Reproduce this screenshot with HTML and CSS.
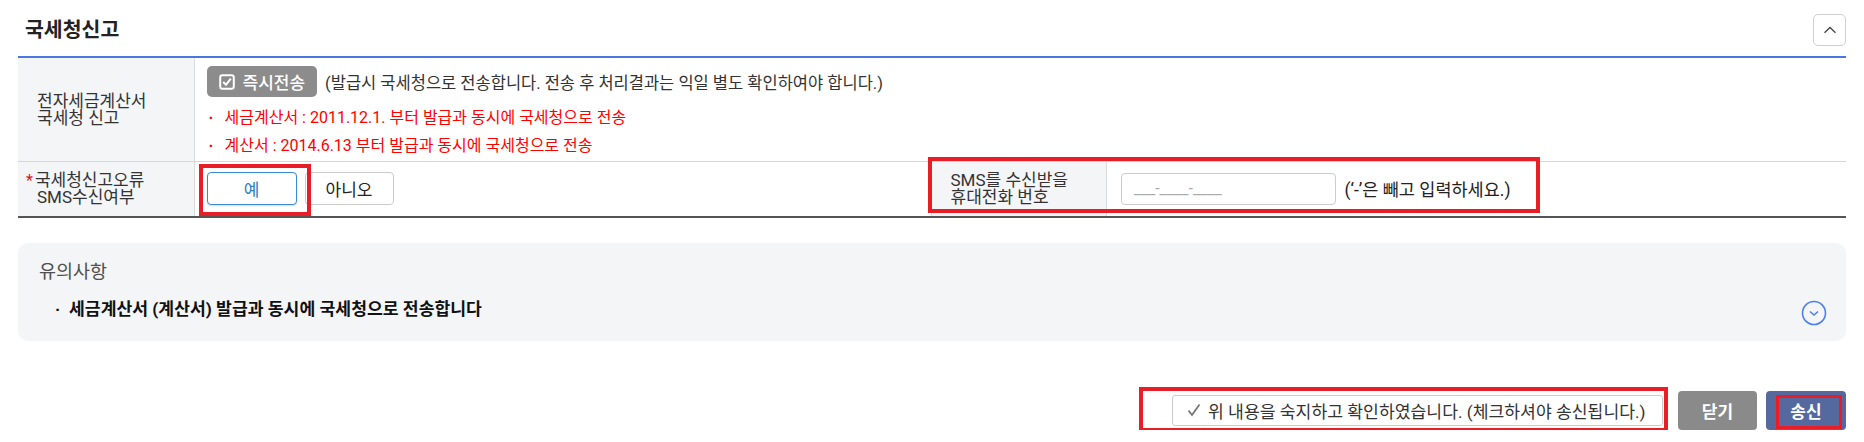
FILE: index.html
```html
<!DOCTYPE html>
<html lang="ko">
<head>
<meta charset="utf-8">
<title>국세청신고</title>
<link rel="stylesheet" href="styles.css">
</head>
<body>
<div class="page">
  <div class="sec-head">
    <h2 class="sec-title">국세청신고</h2>
    <button class="fold-btn" type="button" aria-label="접기">
      <svg width="14" height="8" viewBox="0 0 14 8"><path d="M1.5 6.8 L7 1.5 L12.5 6.8" fill="none" stroke="#444" stroke-width="1.3"/></svg>
    </button>
  </div>

  <table class="form-tbl">
    <colgroup><col class="c-th1"><col class="c-td1"><col class="c-th2"><col class="c-td2"></colgroup>
    <tr class="r1">
      <th>전자세금계산서<br>국세청 신고</th>
      <td colspan="3" class="send-cell">
        <div class="send-line">
          <span class="chip-btn">
            <svg width="16" height="16" viewBox="0 0 16 16"><rect x="1.2" y="1.2" width="13.6" height="13.6" rx="2.2" fill="none" stroke="#fff" stroke-width="2"/><path d="M4.2 8 L7 10.8 L11.8 4.6" fill="none" stroke="#fff" stroke-width="2"/></svg>
            즉시전송
          </span>
          <span class="desc">(발급시 국세청으로 전송합니다. 전송 후 처리결과는 익일 별도 확인하여야 합니다.)</span>
        </div>
        <ul class="red-list">
          <li>세금계산서 : 2011.12.1. 부터 발급과 동시에 국세청으로 전송</li>
          <li>계산서 : 2014.6.13 부터 발급과 동시에 국세청으로 전송</li>
        </ul>
      </td>
    </tr>
    <tr class="r2">
      <th><span class="req">*</span>국세청신고오류<br>SMS수신여부</th>
      <td class="yn-cell">
        <div class="yn">
          <button class="opt on" type="button">예</button>
          <button class="opt off" type="button">아니오</button>
        </div>
      </td>
      <th class="th-sms">SMS를 수신받을<br>휴대전화 번호</th>
      <td class="phone-cell">
        <div class="phone">
          <input class="phone-in" type="text" placeholder="___-____-____">
          <span class="hint">(‘-’은 빼고 입력하세요.)</span>
        </div>
      </td>
    </tr>
  </table>

  <div class="notice">
    <div class="notice-body">
      <div class="notice-title">유의사항</div>
      <ul class="notice-list">
        <li>세금계산서 (계산서) 발급과 동시에 국세청으로 전송합니다</li>
      </ul>
    </div>
    <button class="more-btn" type="button" aria-label="펼치기">
      <svg width="26" height="26" viewBox="0 0 26 26"><circle cx="13" cy="13" r="11.5" fill="none" stroke="#4d7ef2" stroke-width="1.6"/><path d="M9 11.5 L13 15 L17 11.5" fill="none" stroke="#4d7ef2" stroke-width="1.6"/></svg>
    </button>
  </div>

  <div class="actions">
    <label class="agree">
      <svg class="agree-chk" width="14" height="14" viewBox="0 0 14 14"><path d="M1.5 7.5 L5 12 L12.5 1.5" fill="none" stroke="#777" stroke-width="1.8"/></svg>
      위 내용을 숙지하고 확인하였습니다. (체크하셔야 송신됩니다.)
    </label>
    <button class="btn btn-close" type="button">닫기</button>
    <button class="btn btn-send" type="button">송신</button>
  </div>

  <div class="mark mark-yes"></div>
  <div class="mark mark-sms"></div>
  <div class="mark mark-agree"></div>
  <div class="mark mark-send"></div>
</div>
</body>
</html>
```

FILE: styles.css
```css
* { box-sizing: border-box; }

body {
  margin: 0;
  background: #fff;
  font-family: Roboto, "Noto Sans CJK KR", sans-serif;
  color: #333;
}

button, input { font-family: inherit; }

.page {
  position: relative;
  padding: 0 18px;
}

/* header */
.sec-head {
  display: flex;
  align-items: center;
  justify-content: space-between;
  height: 56px;
  padding: 14px 0 10px 7px;
}

.sec-title {
  margin: 0;
  font-size: 20.5px;
  font-weight: 700;
  color: #222;
  line-height: 32px;
}

.fold-btn {
  width: 33px;
  height: 32px;
  padding: 0;
  border: 1px solid #cfcfcf;
  border-radius: 5px;
  background: #fff;
  display: flex;
  align-items: center;
  justify-content: center;
}

/* form table */
.form-tbl {
  width: 100%;
  border-collapse: collapse;
  table-layout: fixed;
  border-top: 2px solid #4a77e2;
  border-bottom: 2px solid #555;
}

.c-th1 { width: 176px; }
.c-td1 { width: 737px; }
.c-th2 { width: 175px; }

.form-tbl th {
  background: #f4f5f7;
  font-weight: 400;
  text-align: left;
  font-size: 17px;
  line-height: 17px;
  color: #333;
  padding: 0 8px 0 19px;
  border-right: 1px solid #dcdcdc;
  vertical-align: middle;
}

.form-tbl td {
  vertical-align: middle;
  font-size: 16px;
}

.r1 th, .r1 td { border-bottom: 1px solid #d6d6d6; }

.send-cell { padding: 8px 12px 1px; }

.send-line {
  display: flex;
  align-items: center;
  height: 31px;
}

.chip-btn {
  display: inline-flex;
  align-items: center;
  gap: 8px;
  height: 31px;
  padding: 0 12px 0 12px;
  background: #8c8c8c;
  border-radius: 5px;
  color: #fff;
  font-size: 17px;
  font-weight: 500;
}

.desc {
  margin-left: 8px;
  color: #333;
  font-size: 16.5px;
}

.red-list {
  list-style: none;
  margin: 7px 0 0;
  padding: 0;
}

.red-list li {
  line-height: 28px;
  color: #ff0000;
  font-size: 16px;
}

.red-list li::before {
  content: "·";
  display: inline-block;
  width: 16px;
  padding-left: 2px;
  font-weight: 700;
}

.r2 td, .r2 th { height: 55px; }

.req {
  color: #e0141e;
  margin-left: -11px;
  margin-right: 2px;
  font-size: 16px;
}

.yn-cell {
  padding: 0 12px;
  border-right: 1px solid #dcdcdc;
}

.yn {
  display: flex;
  gap: 8px;
}

.opt {
  height: 33px;
  border: 1px solid #ccc;
  border-radius: 4px;
  background: #fff;
  font-size: 17px;
  color: #222;
  padding: 0;
}

.opt.on {
  width: 90px;
  border-color: #3a89d4;
  color: #2a7cc6;
  box-shadow: 0 1px 2px rgba(0, 0, 0, 0.15);
}

.opt.off { width: 89px; }

.phone-cell { padding: 0 14px; }

.phone {
  display: flex;
  align-items: center;
}

.phone-in {
  width: 215px;
  height: 32px;
  border: 1px solid #ccc;
  border-radius: 4px;
  padding: 0 12px;
  font-size: 16px;
  color: #333;
}

.phone-in::placeholder { color: #aaa; }

.hint {
  margin-left: 9px;
  font-size: 17.5px;
  color: #222;
}

/* notice */
.notice {
  margin-top: 25px;
  background: #f4f5f7;
  border-radius: 10px;
  padding: 17px 20px 15px 21px;
  display: flex;
  justify-content: space-between;
  align-items: flex-end;
}

.notice-title {
  font-size: 18.5px;
  line-height: 24px;
  color: #4f4f4f;
}

.notice-list {
  list-style: none;
  margin: 13px 0 5px;
  padding: 0 0 0 16px;
}

.notice-list li {
  font-size: 17.2px;
  line-height: 24px;
  font-weight: 700;
  color: #111;
}

.notice-list li::before {
  content: "·";
  display: inline-block;
  width: 14px;
}

.more-btn {
  width: 26px;
  height: 26px;
  padding: 0;
  border: 0;
  background: transparent;
  display: flex;
  margin-right: -1px;
}

/* actions */
.actions {
  margin-top: 50px;
  display: flex;
  justify-content: flex-end;
  align-items: center;
}

.agree {
  display: flex;
  align-items: center;
  width: 491px;
  height: 31px;
  padding: 0 8px 0 14px;
  border: 1px solid #ccc;
  border-radius: 3px;
  background: #fff;
  font-size: 17.2px;
  color: #333;
  white-space: nowrap;
}

.agree-chk { margin-right: 7px; flex: none; }

.btn {
  height: 39px;
  border: 0;
  border-radius: 4px;
  color: #fff;
  font-size: 17px;
  font-weight: 700;
  padding: 0;
}

.btn-close {
  width: 79px;
  margin-left: 15px;
  background: #8a8a8a;
}

.btn-send {
  width: 80px;
  margin-left: 9px;
  background: #55699f;
}

/* red annotation boxes overlaid on the screenshot */
.mark {
  position: absolute;
  border: 4px solid #e91d25;
  pointer-events: none;
}

.mark-yes { left: 199px; top: 164px; width: 112px; height: 52px; }
.mark-sms { left: 928px; top: 157px; width: 612px; height: 56px; }
.mark-agree { left: 1139px; top: 387px; width: 529px; height: 45px; }
.mark-send { left: 1776px; top: 395px; width: 66px; height: 34px; border-width: 3px; }
```
